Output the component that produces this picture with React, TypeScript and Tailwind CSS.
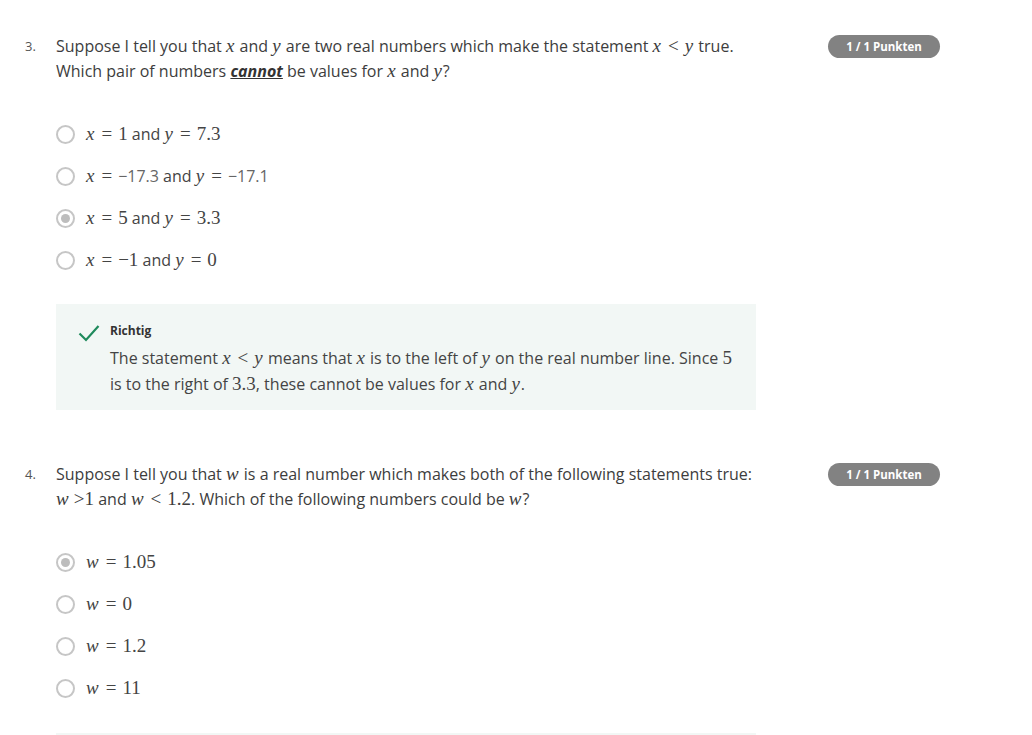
import React from 'react';

const M = ({ children }: { children: React.ReactNode }) => (
  <span className="font-['Liberation_Serif',serif] italic text-[19px] leading-none pr-[1px]">{children}</span>
);
const N = ({ children }: { children: React.ReactNode }) => (
  <span className="font-['Liberation_Serif',serif] text-[19px] leading-none">{children}</span>
);
const Op = ({ children }: { children: React.ReactNode }) => (
  <span className="font-['Liberation_Serif',serif] text-[19px] leading-none px-[6px]">{children}</span>
);

function Badge() {
  return (
    <div className="ml-[72px] mt-[1px] w-[112px] h-[23px] shrink-0 rounded-full bg-[#828282] text-white text-[11.5px] font-bold flex items-center justify-center">
      1 / 1 Punkten
    </div>
  );
}

function Radio({ checked }: { checked?: boolean }) {
  return (
    <span className="w-[19px] h-[19px] rounded-full border-2 border-[#c6c6c6] flex items-center justify-center shrink-0">
      {checked && <span className="w-[9px] h-[9px] rounded-full bg-[#bdbdbd]" />}
    </span>
  );
}

function Option({ checked, children }: { checked?: boolean; children: React.ReactNode }) {
  return (
    <div className="flex items-center h-[42px]">
      <Radio checked={checked} />
      <div className="ml-[11px] text-[16px] text-[#444]">{children}</div>
    </div>
  );
}

function Check() {
  return (
    <svg width="22" height="18" viewBox="0 0 22 18" className="shrink-0 mt-[2px]">
      <path d="M1.5 9.5 L8 16 L20.5 2" fill="none" stroke="#1f8a5c" strokeWidth="2.2" />
    </svg>
  );
}

export default function App() {
  return (
    <div className="w-full h-[735px] overflow-hidden bg-white text-[#3d3d3d] font-['Open_Sans',sans-serif]">
      {/* question 3 */}
      <div className="flex pl-[25px] pt-[34px]">
        <div className="w-[31px] text-[13px] text-[#555] leading-[25px]">3.</div>
        <div className="w-[700px]">
          <div className="text-[16px] leading-[25px]">
            <div>
              Suppose I tell you that <M>x</M> and <M>y</M> are two real numbers which make the statement <M>x</M><Op>&lt;</Op><M>y</M> true.
            </div>
            <div>
              Which pair of numbers <span className="font-bold italic underline text-[#333]">cannot</span> be values for <M>x</M> and <M>y</M>?
            </div>
          </div>
          <div className="mt-[29px]">
            <Option>
              <M>x</M><Op>=</Op><N>1</N> and <M>y</M><Op>=</Op><N>7.3</N>
            </Option>
            <Option>
              <M>x</M><Op>=</Op><span className="text-[#666]">−17.3</span> and <M>y</M><Op>=</Op><span className="text-[#666]">−17.1</span>
            </Option>
            <Option checked>
              <M>x</M><Op>=</Op><N>5</N> and <M>y</M><Op>=</Op><N>3.3</N>
            </Option>
            <Option>
              <M>x</M><Op>=</Op><N>−1</N> and <M>y</M><Op>=</Op><N>0</N>
            </Option>
          </div>
          <div className="mt-[23px] h-[106px] bg-[#f2f7f5] pl-[22px] pt-[18px] flex">
            <Check />
            <div className="ml-[10px]">
              <div className="text-[12px] font-bold text-[#333] leading-[18px]">Richtig</div>
              <div className="text-[16px] leading-[26px] text-[#444] mt-[5px]">
                <div>
                  The statement <M>x</M><Op>&lt;</Op><M>y</M> means that <M>x</M> is to the left of <M>y</M> on the real number line. Since <N>5</N>
                </div>
                <div>
                  is to the right of <N>3.3</N>, these cannot be values for <M>x</M> and <M>y</M>.
                </div>
              </div>
            </div>
          </div>
        </div>
        <Badge />
      </div>

      {/* question 4 */}
      <div className="flex pl-[25px] pt-[52px]">
        <div className="w-[31px] text-[13px] text-[#555] leading-[25px]">4.</div>
        <div className="w-[700px]">
          <div className="text-[16px] leading-[25px]">
            <div>
              Suppose I tell you that <M>w</M> is a real number which makes both of the following statements true:
            </div>
            <div>
              <M>w</M> <N>&gt;1</N> and <M>w</M><Op>&lt;</Op><N>1.2</N>. Which of the following numbers could be <M>w</M>?
            </div>
          </div>
          <div className="mt-[29px]">
            <Option checked>
              <M>w</M><Op>=</Op><N>1.05</N>
            </Option>
            <Option>
              <M>w</M><Op>=</Op><N>0</N>
            </Option>
            <Option>
              <M>w</M><Op>=</Op><N>1.2</N>
            </Option>
            <Option>
              <M>w</M><Op>=</Op><N>11</N>
            </Option>
          </div>
          <div className="mt-[24px] h-[106px] bg-[#f2f7f5]" />
        </div>
        <Badge />
      </div>
    </div>
  );
}
